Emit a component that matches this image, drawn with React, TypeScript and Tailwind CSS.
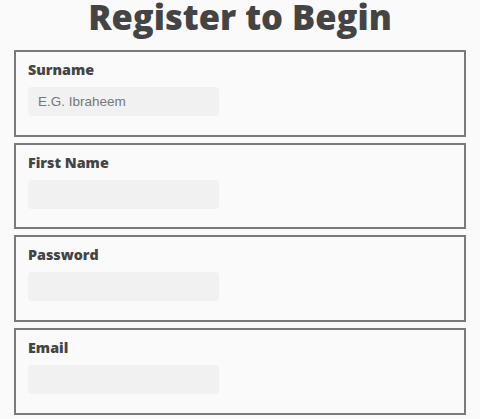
import { useState } from "react";

const fields = [
  { name: "surname", label: "Surname", placeholder: "E.G. Ibraheem", type: "text" },
  { name: "firstName", label: "First Name", placeholder: "", type: "text" },
  { name: "password", label: "Password", placeholder: "", type: "password" },
  { name: "email", label: "Email", placeholder: "", type: "email" },
];

export default function App() {
  const [form, setForm] = useState<Record<string, string>>({
    surname: "",
    firstName: "",
    password: "",
    email: "",
  });

  const handleChange = (e: React.ChangeEvent<HTMLInputElement>) => {
    const { name, value } = e.target;
    setForm({ ...form, [name]: value });
  };

  return (
    <div className="min-h-[419px] bg-[#fafafa] px-[14px] text-[#444]">
      {/* 제목 */}
      <h1 className="text-center text-[34.5px] font-extrabold leading-[34px] mb-[16px] font-['Open_Sans',sans-serif]">
        Register to Begin
      </h1>
      <form className="flex flex-col gap-[6px]">
        {fields.map((f) => (
          <div
            key={f.name}
            className="border-2 border-[#7a7a7a] px-3 pt-2 pb-[18.67px]"
          >
            <label className="block text-[14.3px] font-extrabold leading-5 mb-[7px] font-['Open_Sans',sans-serif]">
              {f.label}
            </label>
            <input
              name={f.name}
              type={f.type}
              value={form[f.name]}
              onChange={handleChange}
              placeholder={f.placeholder}
              className="block w-[191px] h-[29px] rounded bg-[#f1f1f1] px-[10px] text-[13.5px] text-[#555] placeholder:text-[#777] outline-none font-['Liberation_Sans',Arial,sans-serif]"
            />
          </div>
        ))}
      </form>
    </div>
  );
}
